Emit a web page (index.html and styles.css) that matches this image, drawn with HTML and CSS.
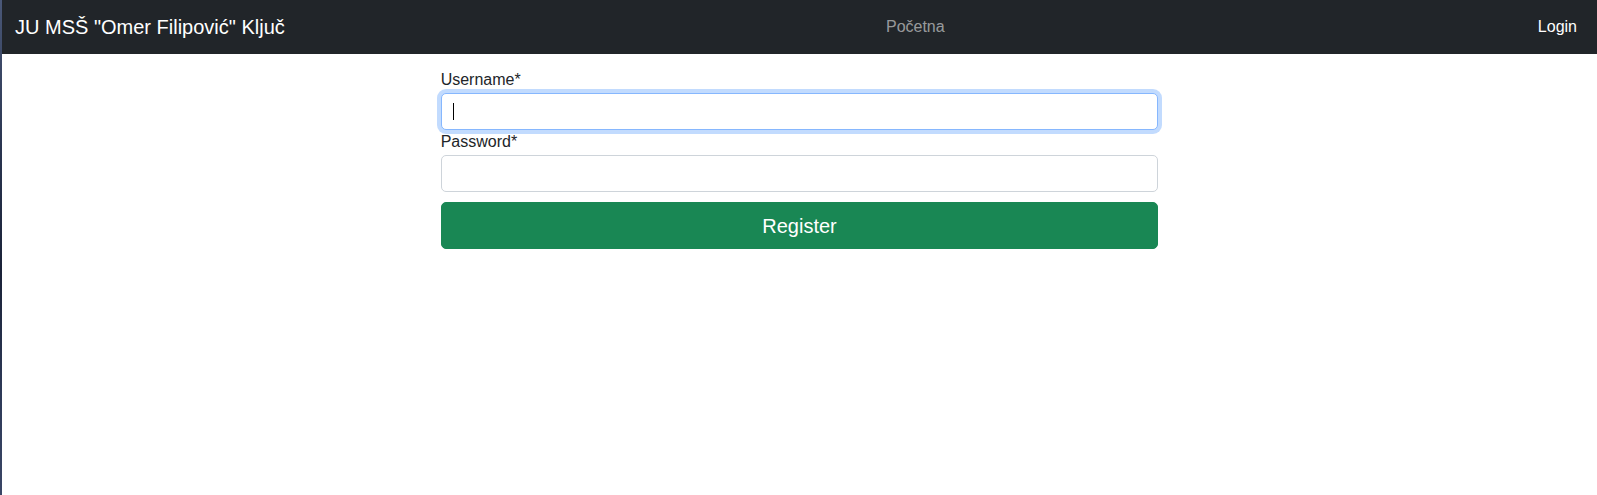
FILE: index.html
```html
<!DOCTYPE html>
<html lang="bs">
<head>
<meta charset="utf-8">
<title>Register</title>
<link rel="stylesheet" href="styles.css">
</head>
<body>
<div class="page">
  <nav class="navbar">
    <a class="brand" href="#">JU MSŠ "Omer Filipović" Ključ</a>
    <div class="nav-center"><a class="nav-link muted" href="#">Početna</a></div>
    <a class="nav-link login" href="#">Login</a>
  </nav>
  <main class="main">
    <form class="form">
      <label class="label" for="username">Username*</label>
      <div class="field">
        <input class="control focused" id="username" type="text">
        <span class="caret"></span>
      </div>
      <label class="label" for="password">Password*</label>
      <div class="field">
        <input class="control" id="password" type="password">
      </div>
      <button class="btn" type="button">Register</button>
    </form>
  </main>
</div>
</body>
</html>
```

FILE: styles.css
```css
* { box-sizing: border-box; }
html, body { margin: 0; height: 100%; }
body {
  font-family: "Liberation Sans", Arial, sans-serif;
  font-size: 16px;
  line-height: 1.5;
  color: #212529;
  background: linear-gradient(to bottom, #4a5878 0, #2a3550 30%, #1a2238 55%, #2e3a58 80%, #3a4666 100%) left top / 2px 100% no-repeat, #fff;
}
.page { margin-left: 2px; min-height: 100%; background: #fff; }
.navbar {
  display: flex;
  align-items: center;
  height: 54px;
  padding: 0 12px;
  background: #212529;
}
.brand {
  font-size: 20px;
  color: #fff;
  text-decoration: none;
  margin-right: 16px;
  padding-left: 1px;
  white-space: nowrap;
}
.nav-center { flex: 1; display: flex; justify-content: center; }
.nav-link { text-decoration: none; padding: 0 8px; font-size: 16px; }
.muted { color: rgba(255,255,255,.55); }
.login { color: #fff; }
.main { display: flex; justify-content: center; padding-top: 14px; }
.form { width: 45%; display: flex; flex-direction: column; }
.label { display: block; margin-bottom: 1px; }
.field { position: relative; }
.control {
  display: block;
  width: 100%;
  height: 37px;
  padding: 6px 12px;
  font: inherit;
  color: #212529;
  background: #fff;
  border: 1px solid #ced4da;
  border-radius: 5px;
  outline: none;
}
.control.focused {
  border-color: #86b7fe;
  box-shadow: 0 0 0 4px rgba(13,110,253,.25);
}
.caret {
  position: absolute;
  left: 12px;
  top: 10px;
  width: 1px;
  height: 17px;
  background: #000;
}
.btn {
  margin-top: 10px;
  height: 47px;
  font: inherit;
  font-size: 20px;
  color: #fff;
  background: #198754;
  border: 1px solid #198754;
  border-radius: 5px;
}
```
